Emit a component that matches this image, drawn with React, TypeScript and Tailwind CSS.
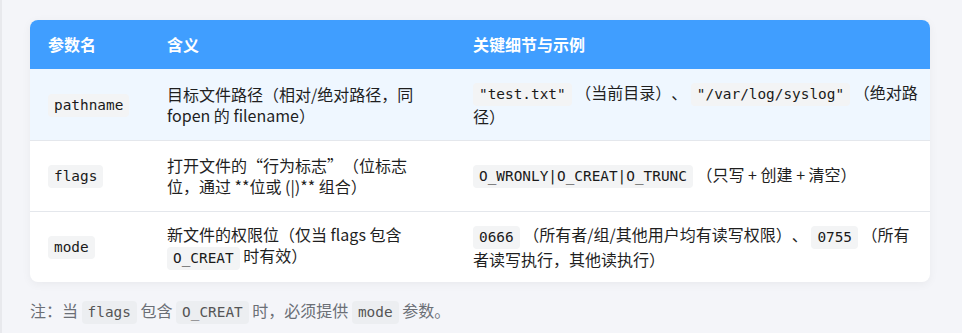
import type { ReactNode } from 'react';

const sans = { fontFamily: '"Noto Sans CJK SC", "Noto Sans", sans-serif' };

function Code({ children, muted }: { children: ReactNode; muted?: boolean }) {
  return (
    <code
      className={`inline-block rounded-[4px] px-[6px] py-[3px] align-middle font-['DejaVu_Sans_Mono',monospace] text-[14.4px] leading-[17px] ${
        muted ? 'bg-[#eceef1] text-[#555]' : 'bg-[#f3f4f5] text-[#1a1a1a]'
      }`}
    >
      {children}
    </code>
  );
}

const rows: { name: string; meaning: ReactNode; detail: ReactNode }[] = [
  {
    name: 'pathname',
    meaning: '目标文件路径（相对/绝对路径，同 fopen 的 filename）',
    detail: (
      <>
        <Code>"test.txt"</Code> （当前目录）、 <Code>"/var/log/syslog"</Code> （绝对路径）
      </>
    ),
  },
  {
    name: 'flags',
    meaning: '打开文件的“行为标志”（位标志位，通过 **位或 (|)** 组合）',
    detail: (
      <>
        <Code>O_WRONLY|O_CREAT|O_TRUNC</Code> （只写 + 创建 + 清空）
      </>
    ),
  },
  {
    name: 'mode',
    meaning: (
      <>
        新文件的权限位（仅当 flags 包含 <Code>O_CREAT</Code> 时有效）
      </>
    ),
    detail: (
      <>
        <Code>0666</Code> （所有者/组/其他用户均有读写权限）、 <Code>0755</Code> （所有者读写执行，其他读执行）
      </>
    ),
  },
];

export default function App() {
  return (
    <div className="flex h-[333px] w-[962px] bg-[#f4f5f9] [text-spacing-trim:space-all]" style={sans}>
      <div className="w-[2px] bg-[#e8e9ed]" />
      <div className="flex-1 pl-[28px] pr-[32px] pt-[20px]">
        <div className="overflow-hidden rounded-[8px] bg-white shadow-[0_2px_10px_rgba(0,0,0,0.05)]">
          <div className="grid grid-cols-[119px_306px_1fr] bg-[#409eff] text-[16px] font-bold leading-[21px] text-white">
            <div className="px-[18px] py-[14px]">参数名</div>
            <div className="px-[18px] py-[14px]">含义</div>
            <div className="px-[18px] py-[14px]">关键细节与示例</div>
          </div>
          {rows.map((row, i) => (
            <div
              key={row.name}
              className={`grid grid-cols-[119px_306px_1fr] items-center text-[16px] leading-[21px] text-[#1f1f1f] ${
                i > 0 ? 'border-t border-[#e4e7ec]' : ''
              } ${i === 0 ? 'h-[71px] bg-[#eff7ff]' : 'h-[71px]'}`}
            >
              <div className="px-[18px]">
                <Code>{row.name}</Code>
              </div>
              <div className="px-[18px]">{row.meaning}</div>
              <div className="pl-[18px] pr-[10px]">{row.detail}</div>
            </div>
          ))}
        </div>
        <p className="mt-[16px] text-[16px] leading-[25px] text-[#6b6f76]">
          注：当 <Code muted>flags</Code> 包含 <Code muted>O_CREAT</Code> 时，必须提供 <Code muted>mode</Code> 参数。
        </p>
      </div>
    </div>
  );
}
